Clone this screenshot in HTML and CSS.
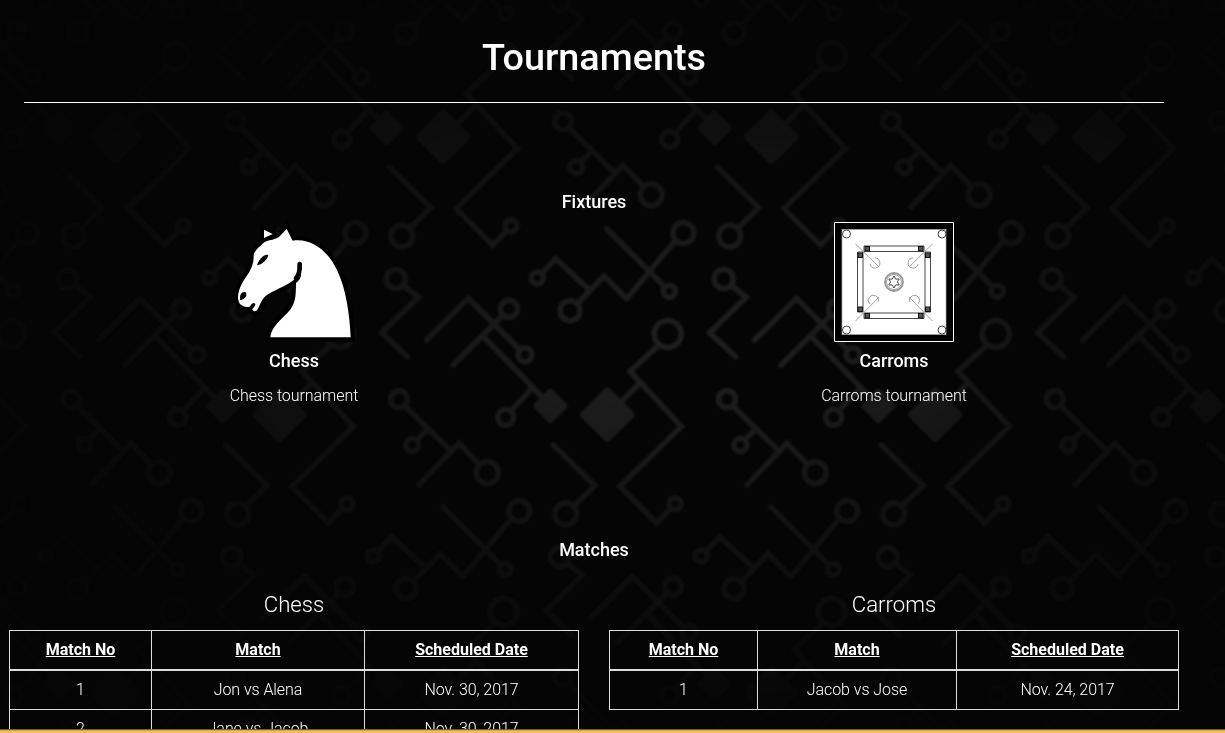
FILE: index.html
```html
<!DOCTYPE html>
<html lang="en">
<head>
<meta charset="utf-8">
<title>Tournaments</title>
<link rel="stylesheet" href="styles.css">
</head>
<body>
<svg class="backdrop" viewBox="0 0 1225 733" aria-hidden="true">
  <defs>
    <radialGradient id="fade" gradientUnits="userSpaceOnUse" cx="0" cy="0" r="1" gradientTransform="translate(700 345) scale(730 370)">
      <stop offset="0" stop-color="#fff"/>
      <stop offset=".25" stop-color="#fff" stop-opacity=".86"/>
      <stop offset=".6" stop-color="#fff" stop-opacity=".39"/>
      <stop offset="1" stop-color="#fff" stop-opacity=".07"/>
    </radialGradient>
    <mask id="vignette" maskUnits="userSpaceOnUse" x="0" y="0" width="1225" height="733"><rect width="1225" height="733" fill="url(#fade)"/></mask>
    <g id="circuit">
      <path class="pad" d="M607.3 391l23.7 23.7-23.7 23.7-23.7-23.7zM550.6 392.5l13.5 13.5-13.5 13.5-13.5-13.5z"/>
      <path d="M620 403l18-18M659 345l-29 26.500 51.500 55-61.500 60 36.500 36.500 14-14"/>
      <circle cx="667.700" cy="334" r="13.500"/><circle cx="675" cy="503.700" r="6"/>
      <path d="M426.700 340l41.600-41.700L519 349M503 315l-50 50M483 336l62 64M531.700 388.500L511 411"/>
      <circle cx="525" cy="354.700" r="7"/><circle cx="509" cy="308.700" r="8.500"/><circle cx="505.700" cy="417.300" r="8"/>
      <path d="M553.300 445l41.700 40.700-21 20"/><circle cx="565.700" cy="514" r="11"/>
      <path d="M405 406l45 44M426.700 430l-9 9M419 485l40-41.700 20 20.700"/>
      <circle cx="399" cy="399.300" r="8.500"/><circle cx="412.300" cy="445" r="6.500"/><circle cx="487.300" cy="472.700" r="11"/>
      <path d="M442.700 506.700l58 58M511 519l-48.300 57.700M462.700 576.700L440 554l-26 27M424 566.700l-32.300-30-14 15"/>
      <circle cx="505.300" cy="569.300" r="6"/><circle cx="519.300" cy="511" r="10.500"/><circle cx="406" cy="588.700" r="10"/><circle cx="373.300" cy="556" r="6"/>
      <path d="M403 285l15.300 12.300-36.600 35.400 26 24"/><circle cx="395.700" cy="279" r="9.500"/>
    </g>
    <g id="band"><use href="#circuit" x="-656"/><use href="#circuit" x="-328"/><use href="#circuit"/><use href="#circuit" x="328"/><use href="#circuit" x="656"/><use href="#circuit" x="984"/></g>
  </defs>
  <g class="traces" mask="url(#vignette)">
    <use href="#band" y="-556"/><use href="#band" x="-164" y="-278"/><use href="#band"/><use href="#band" x="-164" y="278"/>
  </g>
</svg>
<main class="page">
  <header class="title"><h1>Tournaments</h1></header>
  <section class="fixtures">
    <h4>Fixtures</h4>
    <div class="row">
      <article class="sport">
        <svg class="icon" viewBox="72 36 360 360">
          <path class="halo" d="M182 383h241c-3-70-14-145-40-200-25-54-73-103-135-90l-18-37-24 26c-18 10-31 7-46 17-16 16-31 30-29 43 0 36-24 56-36 81-10 19-16 43-5 59 9 10 21 9 30 12 8 10 18 14 28 4 9-12 14-31 25-42 24-18 56-26 82-48 8 34-2 70-23 95-19 23-49 43-50 80zM163 62v22l19-12z"/>
          <path class="fill" d="M181 382h241c-3-70-14-145-40-200-25-54-73-99-134-90l-18-35-24 25c-18 10-31 7-46 17-16 16-31 26-29 43 0 36-24 56-36 81-10 19-16 43-5 59 9 8 19 11 29 8 9-14 14-12 17-7-1 7-6 10-9 15 2 7 8 7 14 3 9-14 12-30 25-42 24-20 60-28 86-50 17-11 16-27 9-42 16 12 18 38-3 52-1 35 2 61-26 90-19 20-49 43-51 73zM162 59v25l26-12z"/>
          <path class="ink" d="M269 162c1 17 0 30-11 43"/>
          <path d="M141 166c6-17 20-35 34-31-3 14-17 28-34 31zM90 271c-1-14 3-28 17-24 7 12-5 21-17 24z"/>
        </svg>
        <h4>Chess</h4><p>Chess tournament</p>
      </article>
      <article class="sport">
        <svg class="icon" viewBox="0 0 120 120">
          <path class="frame" d="M.5.5h119v119H.5z"/><rect class="board" x="8" y="7.500" width="104" height="105"/>
          <g class="lines">
            <circle cx="12.500" cy="12" r="4"/><circle cx="108" cy="12" r="4"/><circle cx="12.500" cy="108" r="4"/><circle cx="108" cy="108" r="4"/>
            <path d="M30 24h60v5.500H30zM30 91h60v5.500H30zM23.500 30H29v60h-5.500zM91 30h5.500v60H91z"/>
            <g class="thin"><path d="M21.500 22L45 45M98.500 22L75 45M21.500 99L45 75M98.500 99L75 75"/><path d="M36 42a5 5 0 1 0 5-6M84 42a5 5 0 1 1-5-6M44 80a5 5 0 1 0-8 2M76 80a5 5 0 1 1 8 2"/><circle cx="60" cy="60" r="7.500"/></g>
            <circle class="ring" cx="60" cy="60" r="9"/><path d="M60 54l1.700 3.100 3.500-.1-1.800 3 1.800 3-3.500-.1L60 66l-1.700-3.100-3.500.1 1.800-3-1.800-3 3.500.1z"/>
          </g>
          <g class="studs"><rect x="31" y="24.500" width="4.500" height="4.500"/><rect x="84.500" y="24.500" width="4.500" height="4.500"/><rect x="31" y="91.500" width="4.500" height="4.500"/><rect x="84.500" y="91.500" width="4.500" height="4.500"/><rect x="24" y="31" width="4.500" height="4.500"/><rect x="24" y="85" width="4.500" height="4.500"/><rect x="91.500" y="31" width="4.500" height="4.500"/><rect x="91.500" y="85" width="4.500" height="4.500"/></g>
        </svg>
        <h4>Carroms</h4><p>Carroms tournament</p>
      </article>
    </div>
  </section>
  <section class="matches">
    <h4>Matches</h4>
    <div class="row">
      <div class="league">
        <h3>Chess</h3>
        <table>
          <colgroup><col class="c142"><col class="c213"><col></colgroup>
          <thead><tr><th>Match No</th><th>Match</th><th>Scheduled Date</th></tr></thead>
          <tbody><tr><td>1</td><td>Jon vs Alena</td><td>Nov. 30, 2017</td></tr><tr><td>2</td><td>Jane vs Jacob</td><td>Nov. 30, 2017</td></tr></tbody>
        </table>
      </div>
      <div class="league">
        <h3>Carroms</h3>
        <table>
          <colgroup><col class="c148"><col class="c199"><col></colgroup>
          <thead><tr><th>Match No</th><th>Match</th><th>Scheduled Date</th></tr></thead>
          <tbody><tr><td>1</td><td>Jacob vs Jose</td><td>Nov. 24, 2017</td></tr></tbody>
        </table>
      </div>
    </div>
  </section>
</main>
<div class="bottom-bar"></div>
</body>
</html>
```

FILE: styles.css
```css
* { box-sizing: border-box; }
html, body { height: 733px; overflow: hidden; }
body { margin: 0; background: #050505; color: #fff; font: 300 16px/1.42857 Roboto, sans-serif; text-align: center; }
h1, h3, h4, p { margin: 0; }
.backdrop { position: absolute; inset: 0; width: 1225px; height: 733px; z-index: -1; }
.traces { fill: none; stroke: #1f1f1f; stroke-width: 5.5; stroke-linecap: round; stroke-linejoin: miter; filter: blur(.8px); }
.pad { fill: #1f1f1f; stroke-width: 7; stroke-linejoin: round; }
.page { width: 1200px; margin-left: -6px; }
.title { height: 103px; margin: 0 30px; padding-top: 36px; border-bottom: 1px solid #fff; }
h1 { font-weight: 500; font-size: 37.8px; line-height: 42px; }
h4 { font-weight: 500; font-size: 18px; line-height: 20px; }
.fixtures { height: 437px; padding-top: 89px; }
.row { display: grid; grid-template-columns: 1fr 1fr; }
.fixtures .row { padding-top: 10px; }
.icon { display: block; width: 120px; height: 120px; margin: 0 auto 9px; overflow: visible; }
.sport p { margin-top: 13px; line-height: 23px; letter-spacing: -.06px; }
.halo { fill: none; stroke: #000; stroke-width: 24; }
.fill { fill: #fff; }
.ink { fill: none; stroke: #000; stroke-width: 14; stroke-linecap: round; }
.frame { fill: #000; stroke: #fff; stroke-width: 1; }
.board { fill: #fff; stroke: #aaa; stroke-width: .7; }
.lines { fill: none; stroke: #333; stroke-width: .9; }
.thin { stroke: #888; stroke-width: .8; }
.ring { stroke: #999; stroke-width: 1.8; }
.studs { fill: #555; stroke: #111; stroke-width: 1; }
.matches .row { padding-top: 32px; }
.league { padding: 0 15px; }
h3 { font-weight: 300; font-size: 22.2px; line-height: 25px; margin-bottom: 13px; }
table { width: 570px; table-layout: fixed; border-collapse: collapse; }
th, td { border: 1px solid #ddd; padding: 8px; line-height: 22px; letter-spacing: -.06px; }
th { border-bottom-width: 2px; padding: 8px 8px 7px; font-weight: 700; text-decoration: underline; letter-spacing: 0; }
thead tr { height: 39px; }
.c142 { width: 142px; }
.c213 { width: 213px; }
.c148 { width: 148px; }
.c199 { width: 199px; }
.bottom-bar { position: fixed; left: 0; right: 0; bottom: 0; height: 4px; background: linear-gradient(#6b5f48 0 1px, #d8a646 1px 2px, #efbf5c 2px); }
```
